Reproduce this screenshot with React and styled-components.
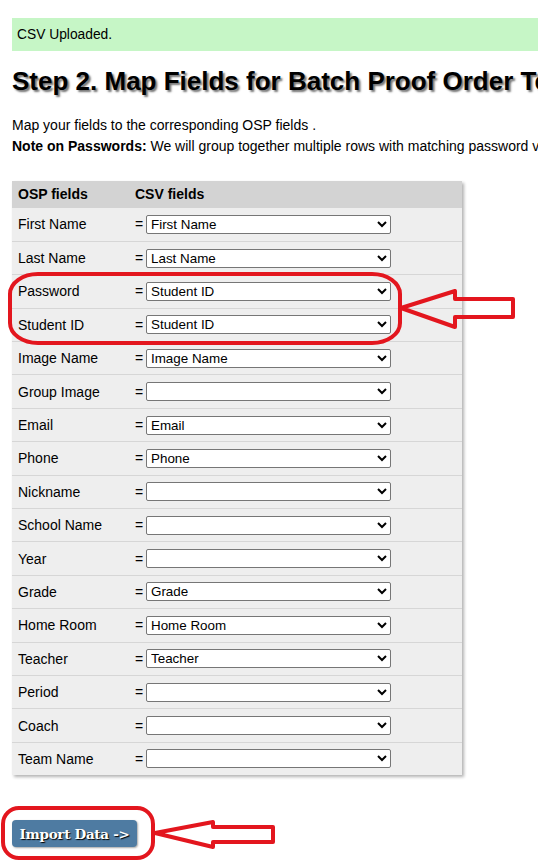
import styled, { createGlobalStyle } from "styled-components";

const GlobalStyle = createGlobalStyle`
  html, body {
    margin: 0;
    padding: 0;
    background: #ffffff;
    overflow: hidden;
  }
  body {
    font-family: "Liberation Sans", Arial, sans-serif;
    color: #000;
  }
`

const Page = styled.div`
  position: relative;
  width: 538px;
  height: 862px;
  overflow: hidden;
  padding: 18px 0 0 12px;
  box-sizing: border-box;
`

const Alert = styled.div`
  width: 700px;
  height: 33px;
  background-color: #c6f6c6;
  font-size: 13.8px;
  line-height: 33px;
  padding-left: 5px;
  white-space: nowrap;
`

const Heading = styled.h2`
  margin: 15px 0 0 0;
  font-size: 26px;
  line-height: 30px;
  font-weight: bold;
  white-space: nowrap;
  text-shadow: 2px 2px 2px rgba(0, 0, 0, 0.55);
`

const Intro = styled.p`
  margin: ${(p) => (p.$first ? "19px" : "0")} 0 0 0;
  font-size: 14px;
  line-height: 21px;
  white-space: nowrap;
`

const Table = styled.div`
  margin-top: 23.5px;
  width: 450px;
  background: #eeeeee;
  box-shadow: 2px 2px 3px rgba(0, 0, 0, 0.3);
`

const Row = styled.div`
  display: grid;
  grid-template-columns: 117px 11px 245px;
  align-items: center;
  height: ${(p) => (p.$head ? "27px" : "33.4px")};
  padding-left: 6px;
  box-sizing: border-box;
  background: ${(p) => (p.$head ? "#d3d3d3" : "#eeeeee")};
  border-top: ${(p) => (p.$head || p.$first ? "none" : "1px solid #d6d6d6")};
  font-size: 14px;
  font-weight: ${(p) => (p.$head ? "bold" : "normal")};
`

const HeadCell = styled.span`
  grid-column: ${(p) => p.$span || "auto"};
`

const Eq = styled.span`
  font-size: 14px;
`

const Select = styled.select`
  width: 245px;
  height: 19px;
  font-family: "Liberation Sans", Arial, sans-serif;
  font-size: 13.4px;
  padding: 0;
  border: 1px solid #767676;
  border-radius: 2px;
  background: #ffffff;
  color: #000;
`

const Button = styled.button`
  margin-top: 45px;
  margin-left: 0;
  width: 125px;
  height: 27px;
  border: none;
  border-radius: 4px;
  background-color: #4e7ba2;
  box-shadow: 1px 1px 2px rgba(0, 0, 0, 0.35);
  color: #ffffff;
  font-family: "DejaVu Serif", "Liberation Serif", serif;
  font-weight: bold;
  font-size: 13.5px;
  letter-spacing: -0.3px;
  text-shadow: 1px 1px 1px #000000;
  padding: 0;
`

const Marks = styled.svg`
  position: absolute;
  left: 0;
  top: 0;
  pointer-events: none;
`

const rows = [
  ["First Name", "First Name"],
  ["Last Name", "Last Name"],
  ["Password", "Student ID"],
  ["Student ID", "Student ID"],
  ["Image Name", "Image Name"],
  ["Group Image", ""],
  ["Email", "Email"],
  ["Phone", "Phone"],
  ["Nickname", ""],
  ["School Name", ""],
  ["Year", ""],
  ["Grade", "Grade"],
  ["Home Room", "Home Room"],
  ["Teacher", "Teacher"],
  ["Period", ""],
  ["Coach", ""],
  ["Team Name", ""],
]

const App = () => {
  return (
    <Page>
      <GlobalStyle />
      <Alert>CSV Uploaded.</Alert>
      <Heading>Step 2. Map Fields for Batch Proof Order Template</Heading>
      <Intro $first>Map your fields to the corresponding OSP fields .</Intro>
      <Intro>
        <b>Note on Passwords:</b> We will group together multiple rows with matching password values.
      </Intro>
      <Table>
        <Row $head>
          <HeadCell>OSP fields</HeadCell>
          <HeadCell $span="2 / 4">CSV fields</HeadCell>
        </Row>
        {rows.map(([label, value], i) => (
          <Row key={label} $first={i === 0}>
            <span>{label}</span>
            <Eq>=</Eq>
            <Select defaultValue={value}>
              <option value="">{""}</option>
              {value && <option value={value}>{value}</option>}
            </Select>
          </Row>
        ))}
      </Table>
      <Button type="button">Import Data -&gt;</Button>

      <Marks width="538" height="862" viewBox="0 0 538 862">
        <g fill="none" stroke="#e3161e" strokeWidth="4" strokeLinejoin="round">
          <rect x="10" y="274" width="390" height="69" rx="28" ry="20" />
          <polygon points="401,308 455,291 455,299 513,299 513,317 455,317 455,327" />
          <rect x="3" y="808" width="150" height="50" rx="16" ry="16" />
          <polygon points="155,833 213,822 213,827 273,827 273,842 213,842 213,847" />
        </g>
      </Marks>
    </Page>
  )
}

export default App;
